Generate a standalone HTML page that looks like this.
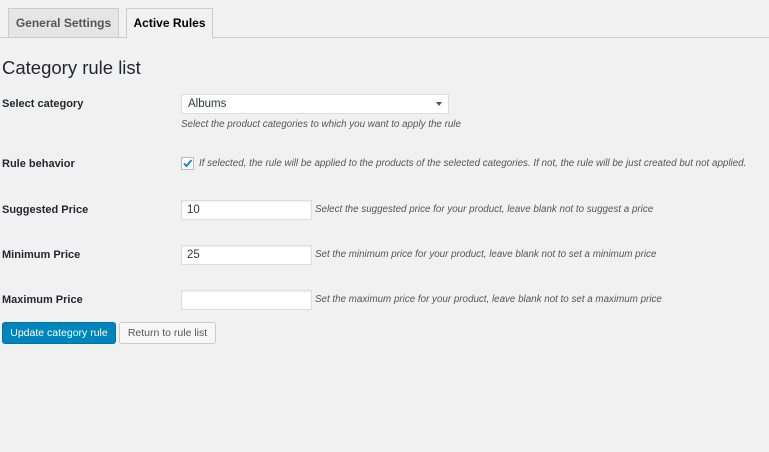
<!DOCTYPE html>
<html><head><style>
body{margin:0;width:769px;height:452px;background:#f1f1f1;font-family:"Liberation Sans",sans-serif;color:#444;position:relative;overflow:hidden}
.a{position:absolute;white-space:nowrap}
.tab{position:absolute;top:8px;height:29px;border:1px solid #ccc;border-bottom:none;box-sizing:border-box;font-size:12px;font-weight:bold;line-height:29px;text-align:center}
.lbl{position:absolute;left:2px;font-size:11px;font-weight:bold;color:#23282d}
.desc{position:absolute;font-size:9.8px;font-style:italic;color:#555;white-space:nowrap}
.inp{position:absolute;left:181px;width:131px;height:20px;background:#fff;border:1px solid #ddd;box-sizing:border-box;box-shadow:inset 0 1px 2px rgba(0,0,0,.07);font-size:11.5px;line-height:18px;padding-left:5px;color:#32373c}
</style></head><body>
<div class="a" style="left:0;top:37px;width:769px;height:1px;background:#ccc"></div>
<div class="tab" style="left:8px;width:111px;background:#e5e5e5;color:#555">General Settings</div>
<div class="tab" style="left:126px;width:87px;height:30px;background:#f1f1f1;color:#000">Active Rules</div>
<div class="a" style="left:2px;top:57px;font-size:18.5px;color:#23282d">Category rule list</div>

<div class="lbl" style="top:98px">Select category</div>
<div class="a" style="left:181px;top:94px;width:268px;height:20px;background:#fff;border:1px solid #ddd;box-sizing:border-box;font-size:11.5px;line-height:18px;padding-left:6px;color:#32373c">Albums<span style="position:absolute;right:6px;top:7px;border:3.5px solid transparent;border-top:4px solid #555;border-bottom:none"></span></div>
<div class="desc" style="left:181px;top:119px">Select the product categories to which you want to apply the rule</div>

<div class="lbl" style="top:158px">Rule behavior</div>
<div class="a" style="left:181px;top:157px;width:13px;height:13px;background:#fff;border:1px solid #bbb;box-sizing:border-box"><svg width="13" height="13" style="position:absolute;left:-1px;top:-1px"><path d="M3 6.5l2.5 2.5 5-6" stroke="#1e8cbe" stroke-width="2" fill="none"/></svg></div>
<div class="desc" style="left:199px;top:158px">If selected, the rule will be applied to the products of the selected categories. If not, the rule will be just created but not applied.</div>

<div class="lbl" style="top:204px">Suggested Price</div>
<div class="inp" style="top:200px">10</div>
<div class="desc" style="left:315px;top:204px">Select the suggested price for your product, leave blank not to suggest a price</div>

<div class="lbl" style="top:249px">Minimum Price</div>
<div class="inp" style="top:245px">25</div>
<div class="desc" style="left:315px;top:249px">Set the minimum price for your product, leave blank not to set a minimum price</div>

<div class="lbl" style="top:294px">Maximum Price</div>
<div class="inp" style="top:290px"></div>
<div class="desc" style="left:315px;top:294px">Set the maximum price for your product, leave blank not to set a maximum price</div>

<div class="a" style="left:2px;top:322px;width:114px;height:22px;background:#0085ba;border:1px solid #0073aa;border-radius:3px;box-sizing:border-box;color:#fff;font-size:10.5px;line-height:20px;text-align:center">Update category rule</div>
<div class="a" style="left:119px;top:322px;width:97px;height:22px;background:#f7f7f7;border:1px solid #ccc;border-radius:3px;box-sizing:border-box;color:#555;font-size:10.5px;line-height:20px;text-align:center">Return to rule list</div>
</body></html>
